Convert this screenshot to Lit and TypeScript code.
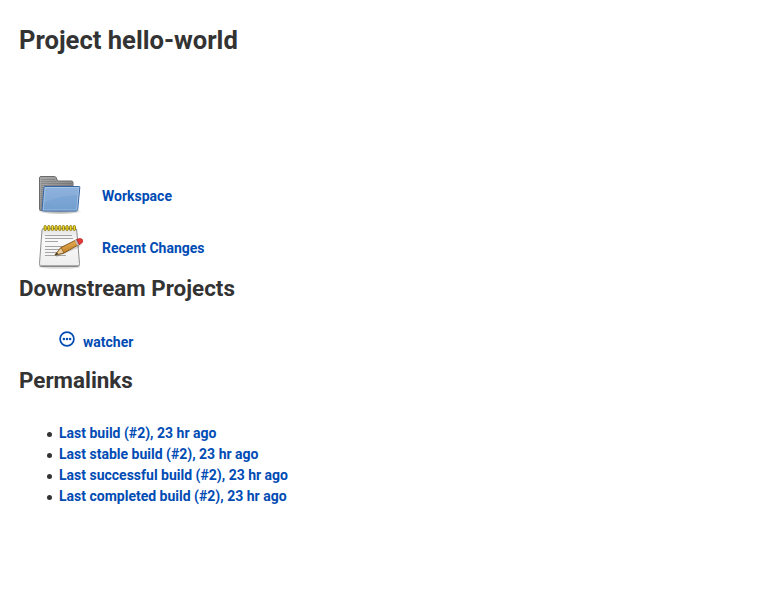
import { LitElement, html, css, svg } from "lit";
import { customElement } from "lit/decorators.js";

const folder = svg`
  <defs>
    <linearGradient id="back" x1="0" y1="0" x2="1" y2="1"><stop offset="0" stop-color="#acacac"/><stop offset="1" stop-color="#707070"/></linearGradient>
    <linearGradient id="front" x1="0" y1="0" x2="0" y2="1"><stop offset="0" stop-color="#85acda"/><stop offset="1" stop-color="#729fcf"/></linearGradient>
    <radialGradient id="shade"><stop offset="0" stop-opacity=".35"/><stop offset=".7" stop-opacity=".2"/><stop offset="1" stop-opacity="0"/></radialGradient>
  </defs>
  <ellipse cx="25" cy="39.500" rx="22" ry="2.800" fill="url(#shade)"/>
  <path d="M4.500 37.500V6q0-1.500 1.500-1.500H19.500q1.200 0 1.700 1.200L22.500 9H36.500q1.500 0 1.500 1.500V38.500H5.500q-1 0-1-1z" fill="url(#back)" stroke="#6a6a6a"/>
  <path d="M6 7.500H20M6 9.500H21M6 11.500H37M6 13.500H37M6 15.500H9M6 17.500H9M6 19.500H8.500M6 21.500H8.500M6 23.500H8M6 25.500H8M6 27.500H8M6 29.500H7.500M6 31.500H7.500M6 33.500H7.500" stroke="#5a5a5a" stroke-width=".7" opacity=".5"/>
  <path d="M10 14.500H44q1 0 .8 1L42.700 37.500q-.2 1.500-1.700 1.500H8.500q-1.600 0-1.400-1.500L9 15.500q.1-1 1-1z" fill="url(#front)" stroke="#3465a4"/>
  <path d="M10 15.500H43.700L41.800 38H8.100z" fill="none" stroke="#fff" opacity=".3"/>
  <path d="M10 16H43.200L42.500 23Q22 24 9 31z" fill="#fff" opacity=".08"/>`;

const notepad = svg`
  <defs>
    <linearGradient id="paper" x1="0" y1="0" x2="0" y2="1"><stop offset="0" stop-color="#e2e2e2"/><stop offset=".3" stop-color="#fafafa"/><stop offset="1" stop-color="#ededed"/></linearGradient>
    <linearGradient id="wood" x1="0" y1="0" x2=".4" y2="1"><stop offset=".2" stop-color="#efb75a"/><stop offset="1" stop-color="#b87822"/></linearGradient>
  </defs>
  <ellipse cx="24.500" cy="42.800" rx="21" ry="2" fill="#000" opacity=".14"/>
  <path d="M8.500 4.500H40q1.500 0 1.700 1.500L44.500 39.500q.2 3-2 3H6.500q-2.200 0-2-3L7 6q.1-1.500 1.500-1.500z" fill="url(#paper)" stroke="#8c8c8c"/>
  <path d="M5.500 41.800H43.500" stroke="#777" stroke-width=".8"/>
  <path d="M10 11.500H37M10 14.500H38M10 17.500H23M10 22.500H36M10 25.500H26M10 28.500H24M10 31.500H31" stroke="#a4a4a4"/>
  ${[0, 1, 2, 3, 4, 5, 6, 7, 8].map((i) => svg`<rect x=${9 + i * 3.65} y="1.500" width="2.300" height="5" rx="1.100" fill="#f2dc28" stroke="#7d6a00" stroke-width=".8"/>`)}
  <path d="M21 32.500L43 23L46 20" stroke="#000" stroke-width="1.500" fill="none" opacity=".15"/>
  <path d="M20 31L26 23.500L42 15.500L44.500 20.300L29 29z" fill="url(#wood)" stroke="#7a4c10" stroke-width=".9"/>
  <path d="M20 31L26 23.500L29 29z" fill="#e9cf9d" stroke="#7a4c10" stroke-width=".7"/>
  <path d="M20 31l2-2.500 1 1.500z" fill="#222"/>
  <path d="M39.800 16.600L42.400 21.400L44.300 20.400L41.800 15.600z" fill="#bbb"/>
  <path d="M41.800 15.600l2.700-1.100q2.800-.2 3.500 2.300 0 1.500-1 2L44.200 20.500z" fill="#e23a3a" stroke="#b01515" stroke-width=".7"/>`;

@customElement("app-root")
export class AppRoot extends LitElement {
  static styles = css`
    :host { display: block; height: 597px; background: #fff; color: #333; font: 14px/21px Roboto, sans-serif; overflow: hidden; }
    main { padding: 24px 19px 0; }
    h1, h2 { margin: 0; font-weight: 700; color: #333; }
    h1 { font-size: 25.600px; line-height: 32px; }
    h2 { font-size: 22.400px; line-height: 28px; padding-bottom: 2px; }
    a { color: #004bb4; font-weight: 700; text-decoration: none; }
    .links { margin-top: 114px; padding-left: 16px; }
    .row { display: flex; align-items: center; height: 52px; gap: 19px; }
    .row svg { width: 48px; height: 48px; }
    .down { display: flex; gap: 8px; margin: 28px 0 13px 40px; height: 21px; }
    .down svg { width: 16px; height: 16px; margin-top: -1px; }
    ul { margin: 27px 0 0; padding: 0 0 0 28px; list-style: none; }
    li { display: flex; align-items: center; gap: 7px; }
    li::before { content: ""; width: 5px; height: 5px; border-radius: 50%; background: #333; margin-top: 1px; }
  `;
  render() {
    return html`<main>
      <h1>Project hello-world</h1>
      <div class="links">
        <div class="row"><svg viewBox="0 0 48 48">${folder}</svg><a>Workspace</a></div>
        <div class="row"><svg viewBox="0 0 48 48">${notepad}</svg><a>Recent Changes</a></div>
      </div>
      <h2>Downstream Projects</h2>
      <div class="down"><svg viewBox="0 0 16 16"><circle cx="8" cy="8" r="6.900" fill="none" stroke="#004bb4" stroke-width="1.700"/><g fill="#004bb4"><circle cx="4.900" cy="8" r="1.250"/><circle cx="8" cy="8" r="1.250"/><circle cx="11.100" cy="8" r="1.250"/></g></svg><a>watcher</a></div>
      <h2>Permalinks</h2>
      <ul>
        ${["build", "stable build", "successful build", "completed build"].map((k) => html`<li><a>Last ${k} (#2), 23 hr ago</a></li>`)}
      </ul>
    </main>`;
  }
}
